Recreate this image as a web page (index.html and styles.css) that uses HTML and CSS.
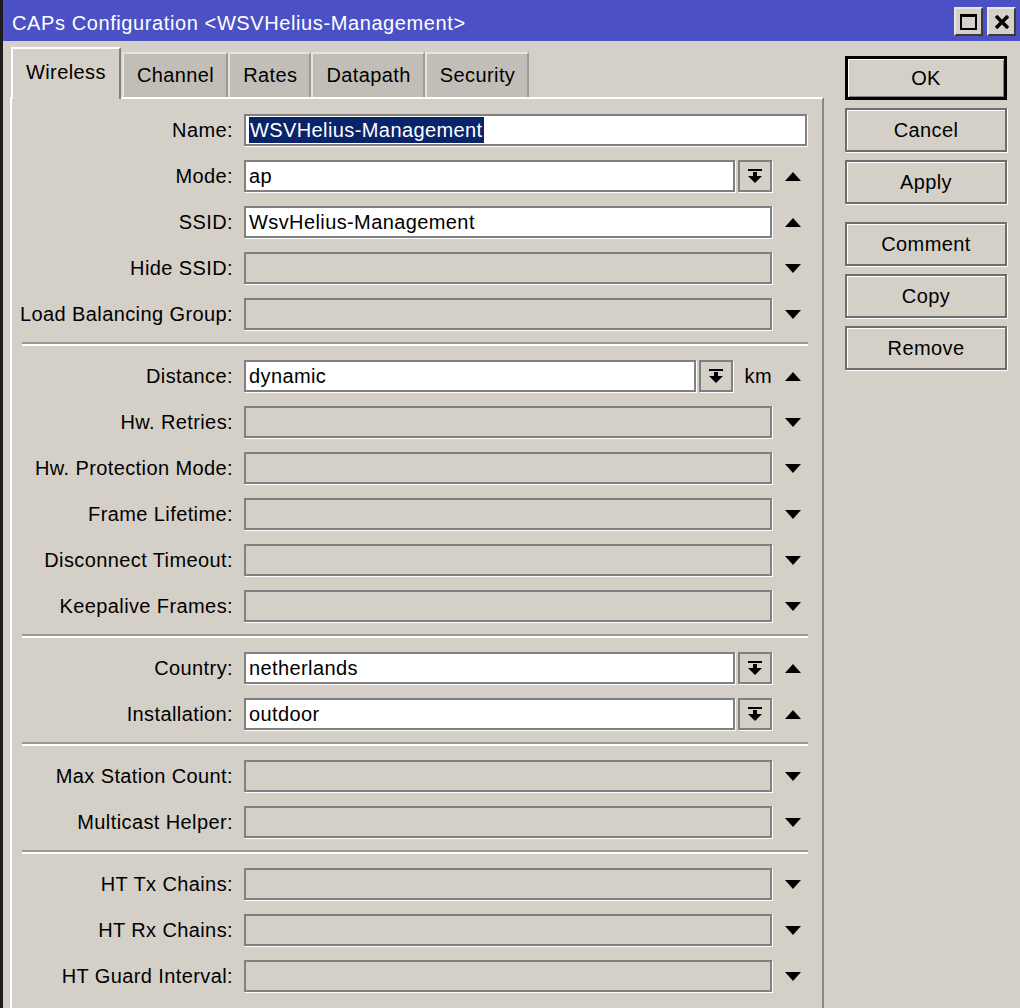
FILE: index.html
```html
<!DOCTYPE html>
<html>
<head>
    <meta charset="utf-8">
    <title>CAPs Configuration</title>
    <link rel="stylesheet" href="styles.css">
</head>
<body>
<div class="window">
    <div class="titlebar">
        <span class="title">CAPs Configuration &lt;WSVHelius-Management&gt;</span>
        <div class="winbtns">
            <span class="winbtn"><span class="maxbox"></span></span>
            <span class="winbtn">
                <svg width="16" height="14" viewBox="0 0 16 14"><path d="M2 1 L14 13 M14 1 L2 13" stroke="#000" stroke-width="3.5"/></svg>
            </span>
        </div>
    </div>

    <div class="main">
        <div class="left">
            <div class="tabs">
                <div class="tab active">Wireless</div>
                <div class="tab">Channel</div>
                <div class="tab">Rates</div>
                <div class="tab">Datapath</div>
                <div class="tab">Security</div>
            </div>

            <div class="panel">
                <div class="row">
                    <label>Name:</label>
                    <div class="field wide"><div class="input"><span class="sel">WSVHelius-Management</span></div></div>
                </div>
                <div class="row">
                    <label>Mode:</label>
                    <div class="field"><div class="input">ap</div><span class="drop"></span></div>
                    <span class="arrow up"></span>
                </div>
                <div class="row">
                    <label>SSID:</label>
                    <div class="field"><div class="input">WsvHelius-Management</div></div>
                    <span class="arrow up"></span>
                </div>
                <div class="row">
                    <label>Hide SSID:</label>
                    <div class="field"><div class="input off"></div></div>
                    <span class="arrow down"></span>
                </div>
                <div class="row">
                    <label>Load Balancing Group:</label>
                    <div class="field"><div class="input off"></div></div>
                    <span class="arrow down"></span>
                </div>

                <div class="sep"></div>

                <div class="row">
                    <label>Distance:</label>
                    <div class="field"><div class="combo"><div class="input">dynamic</div><span class="drop"></span></div><span class="unit">km</span></div>
                    <span class="arrow up"></span>
                </div>
                <div class="row">
                    <label>Hw. Retries:</label>
                    <div class="field"><div class="input off"></div></div>
                    <span class="arrow down"></span>
                </div>
                <div class="row">
                    <label>Hw. Protection Mode:</label>
                    <div class="field"><div class="input off"></div></div>
                    <span class="arrow down"></span>
                </div>
                <div class="row">
                    <label>Frame Lifetime:</label>
                    <div class="field"><div class="input off"></div></div>
                    <span class="arrow down"></span>
                </div>
                <div class="row">
                    <label>Disconnect Timeout:</label>
                    <div class="field"><div class="input off"></div></div>
                    <span class="arrow down"></span>
                </div>
                <div class="row">
                    <label>Keepalive Frames:</label>
                    <div class="field"><div class="input off"></div></div>
                    <span class="arrow down"></span>
                </div>

                <div class="sep"></div>

                <div class="row">
                    <label>Country:</label>
                    <div class="field"><div class="input">netherlands</div><span class="drop"></span></div>
                    <span class="arrow up"></span>
                </div>
                <div class="row">
                    <label>Installation:</label>
                    <div class="field"><div class="input">outdoor</div><span class="drop"></span></div>
                    <span class="arrow up"></span>
                </div>

                <div class="sep"></div>

                <div class="row">
                    <label>Max Station Count:</label>
                    <div class="field"><div class="input off"></div></div>
                    <span class="arrow down"></span>
                </div>
                <div class="row">
                    <label>Multicast Helper:</label>
                    <div class="field"><div class="input off"></div></div>
                    <span class="arrow down"></span>
                </div>

                <div class="sep"></div>

                <div class="row">
                    <label>HT Tx Chains:</label>
                    <div class="field"><div class="input off"></div></div>
                    <span class="arrow down"></span>
                </div>
                <div class="row">
                    <label>HT Rx Chains:</label>
                    <div class="field"><div class="input off"></div></div>
                    <span class="arrow down"></span>
                </div>
                <div class="row">
                    <label>HT Guard Interval:</label>
                    <div class="field"><div class="input off"></div></div>
                    <span class="arrow down"></span>
                </div>
            </div>
        </div>

        <div class="side">
            <button class="btn default">OK</button>
            <button class="btn">Cancel</button>
            <button class="btn">Apply</button>
            <button class="btn gap">Comment</button>
            <button class="btn">Copy</button>
            <button class="btn">Remove</button>
        </div>
    </div>
</div>
</body>
</html>
```

FILE: styles.css
```css
html, body {
    margin: 0;
    padding: 0;
}

body {
    width: 1020px;
    height: 1008px;
    overflow: hidden;
    background: #d4d0c8;
    font-family: "Liberation Sans", Arial, sans-serif;
    font-size: 20px;
    letter-spacing: 0.4px;
    color: #000;
}

.window {
    height: 1008px;
    border-left: 3px solid #1c1c1c;
    box-sizing: border-box;
    display: flex;
    flex-direction: column;
}

.titlebar {
    height: 41px;
    background: #4b51c5;
    display: flex;
    align-items: center;
    justify-content: space-between;
    padding-left: 9px;
    padding-right: 4px;
    flex-shrink: 0;
}

.title {
    color: #fff;
    padding-top: 5px;
    letter-spacing: 0.6px;
}

.winbtns {
    display: flex;
    gap: 4px;
    padding-top: 2px;
}

.winbtn {
    width: 25px;
    height: 25px;
    background: #d4d0c8;
    border: 2px solid #3a3a3a;
    border-top-color: #e8e6e0;
    border-left-color: #e8e6e0;
    display: flex;
    align-items: center;
    justify-content: center;
}

.maxbox {
    width: 13px;
    height: 11px;
    border: 2px solid #000;
    border-top-width: 3px;
}

.main {
    flex: 1;
    display: flex;
}

.left {
    width: 814px;
    margin-left: 7px;
    display: flex;
    flex-direction: column;
}

.tabs {
    display: flex;
    align-items: flex-end;
    height: 56px;
    padding-left: 1px;
}

.tab {
    height: 45px;
    box-sizing: border-box;
    padding: 10px 12px 0 13px;
    background: #c2beb7;
    border-top: 2px solid #e6e4de;
    border-left: 2px solid #e6e4de;
    border-right: 2px solid #9c9a94;
}

.tab.active {
    height: 52px;
    padding: 12px 13px 0 13px;
    margin-right: 1px;
    background: #d4d0c8;
    border-top-color: #fff;
    border-left-color: #fff;
    border-right-color: #808080;
    margin-bottom: -2px;
    position: relative;
    z-index: 1;
}

.panel {
    flex: 1;
    border-top: 2px solid #fff;
    border-left: 2px solid #fff;
    border-right: 2px solid #8a8884;
    padding-top: 8px;
}

.row {
    height: 46px;
    display: flex;
    align-items: center;
}

.row label {
    width: 221px;
    text-align: right;
    padding-right: 11px;
    flex-shrink: 0;
    white-space: nowrap;
}

.field {
    width: 528px;
    height: 32px;
    display: flex;
}

.field.wide {
    width: 563px;
}

.input {
    flex: 1;
    height: 32px;
    box-sizing: border-box;
    background: #fff;
    border: 2px solid #808080;
    box-shadow: 1px 1px 0 #fff;
    padding-left: 3px;
    line-height: 29px;
    white-space: nowrap;
    overflow: hidden;
}

.input.off {
    background: #d4d0c8;
}

.sel {
    background: #0a246a;
    color: #fff;
    padding: 2px 1px 2px 1px;
}

.drop {
    width: 34px;
    height: 32px;
    box-sizing: border-box;
    margin-left: 3px;
    border: 2px solid #808080;
    box-shadow: 1px 1px 0 #fff;
    display: flex;
    align-items: center;
    justify-content: center;
    flex-shrink: 0;
}

.drop::before {
    content: "";
    width: 14px;
    height: 14px;
    background: url("data:image/svg+xml;utf8,<svg xmlns='http://www.w3.org/2000/svg' width='14' height='14'><rect x='0' y='0' width='14' height='2' fill='black'/><rect x='5' y='3' width='4' height='4' fill='black'/><polygon points='0,7 14,7 7,14' fill='black'/></svg>") no-repeat;
}

.combo {
    width: 491px;
    display: flex;
}

.unit {
    margin-left: 12px;
    line-height: 32px;
}

.arrow {
    width: 42px;
    display: flex;
    justify-content: center;
}

.arrow::before {
    content: "";
    width: 0;
    height: 0;
    border-left: 8px solid transparent;
    border-right: 8px solid transparent;
}

.arrow.up::before {
    border-bottom: 9px solid #000;
}

.arrow.down::before {
    border-top: 9px solid #000;
}

.sep {
    height: 4px;
    margin: 5px 14px 7px 10px;
    border-top: 2px solid #9a9892;
    border-bottom: 2px solid #fff;
    box-sizing: border-box;
}

.side {
    width: 162px;
    margin-left: 21px;
    padding-top: 15px;
    display: flex;
    flex-direction: column;
    gap: 8px;
}

.btn {
    height: 44px;
    background: #d4d0c8;
    border: 2px solid #6e6d69;
    box-shadow: 1px 1px 0 #fff, inset 1px 1px 0 #fff;
    font-family: inherit;
    font-size: 20px;
    letter-spacing: 0.4px;
    color: #000;
    padding: 0;
}

.btn.default {
    border: 3px solid #000;
    box-shadow: inset 1px 1px 0 #fff, inset -1px -1px 0 #808080;
}

.btn.gap {
    margin-top: 10px;
}
```
